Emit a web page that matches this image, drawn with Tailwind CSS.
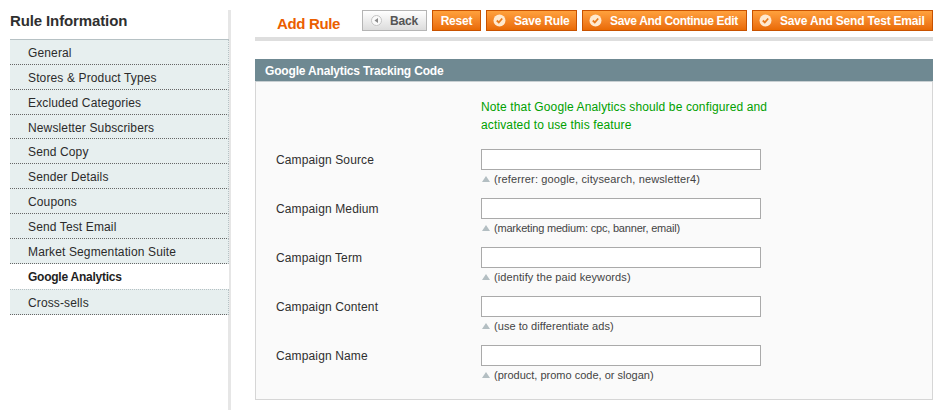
<!DOCTYPE html>
<html><head><meta charset="utf-8"><script src="https://cdn.jsdelivr.net/npm/@tailwindcss/browser@4"></script></head>
<body class="bg-white overflow-hidden">
<div class="w-[943px] h-[410px] overflow-hidden flex font-['Liberation_Sans',Arial,sans-serif] text-[12px] text-[#2f2f2f] tracking-[0.13px]">
  <aside class="w-[231px] shrink-0 mt-[10px] pl-[10px] border-r-[3px] border-[#e6e6e6]">
    <h3 class="h-[29px] pt-[1px] text-[15px] leading-[20px] font-bold text-[#2f2f2f] tracking-[-0.12px]">Rule Information</h3>
    <ul class="w-[219px] border-t border-[#b6c1c4] text-[12px] leading-[24px] text-[#2b2b2b]">
      <li class="h-[24.85px] pl-[18px] pt-[1px] bg-[#e7efef] border-b border-dotted border-[#666] border-r border-r-[#b6c1c4]">General</li>
      <li class="h-[24.85px] pl-[18px] pt-[1px] bg-[#e7efef] border-b border-dotted border-[#666] border-r border-r-[#b6c1c4]">Stores &amp; Product Types</li>
      <li class="h-[24.85px] pl-[18px] pt-[1px] bg-[#e7efef] border-b border-dotted border-[#666] border-r border-r-[#b6c1c4]">Excluded Categories</li>
      <li class="h-[24.85px] pl-[18px] pt-[1px] bg-[#e7efef] border-b border-dotted border-[#666] border-r border-r-[#b6c1c4]">Newsletter Subscribers</li>
      <li class="h-[24.85px] pl-[18px] pt-[1px] bg-[#e7efef] border-b border-dotted border-[#666] border-r border-r-[#b6c1c4]">Send Copy</li>
      <li class="h-[24.85px] pl-[18px] pt-[1px] bg-[#e7efef] border-b border-dotted border-[#666] border-r border-r-[#b6c1c4]">Sender Details</li>
      <li class="h-[24.85px] pl-[18px] pt-[1px] bg-[#e7efef] border-b border-dotted border-[#666] border-r border-r-[#b6c1c4]">Coupons</li>
      <li class="h-[24.85px] pl-[18px] pt-[1px] bg-[#e7efef] border-b border-dotted border-[#666] border-r border-r-[#b6c1c4]">Send Test Email</li>
      <li class="h-[24.85px] pl-[18px] pt-[1px] bg-[#e7efef] border-b border-dotted border-[#666] border-r border-r-[#b6c1c4]">Market Segmentation Suite</li>
      <li class="h-[25.35px] pl-[18px] pt-[1px] bg-white font-bold text-[#1f1f1f] leading-[25px] tracking-[-0.25px]">Google Analytics</li>
      <li class="h-[26px] pl-[18px] pt-[1px] bg-[#e7efef] border-t border-t-[#b6c1c4] border-b border-dotted border-[#666] border-r border-r-[#b6c1c4]">Cross-sells</li>
    </ul>
  </aside>
  <main class="flex-1 min-w-0 pl-[24px] pr-[10px] pt-[10px]">
    <div class="h-[27px] flex items-start border-b-[4px] border-[#dedede] box-content">
      <h3 class="w-[84px] pl-[22px] pt-[5px] text-[15px] leading-[18px] font-bold text-[#eb5e00] whitespace-nowrap tracking-[-0.35px]">Add Rule</h3>
      <div class="flex gap-[5px] font-bold tracking-[-0.2px]">
        <button class="h-[21px] w-[65px] ml-[23px] flex items-center pl-[8px] gap-[8px] bg-gradient-to-b from-[#ffffff] to-[#dcdcdc] border border-[#b5b5b5] text-[#555] text-[12px] leading-none">
          <svg width="11" height="11" viewBox="0 0 11 11"><circle cx="5.500" cy="5.500" r="5" fill="#fafafa" stroke="#c4c4c4"/><path d="M7 3v5L3.500 5.500z" fill="#8a8a8a"/></svg>Back</button>
        <button class="h-[21px] w-[49px] flex items-center justify-center bg-gradient-to-b from-[#ffa13c] to-[#e96a02] border border-[#c85200] text-white text-[12px] leading-none">Reset</button>
        <button class="h-[21px] w-[91px] flex items-center pl-[6px] gap-[8px] bg-gradient-to-b from-[#ffa13c] to-[#e96a02] border border-[#c85200] text-white text-[12px] leading-none whitespace-nowrap">
          <svg width="13" height="13" viewBox="0 0 13 13"><circle cx="6.500" cy="6.500" r="6" fill="#ffe9cf"/><path d="M3.800 6.500l2 2 3.400-4" fill="none" stroke="#e8791a" stroke-width="1.800"/></svg>Save Rule</button>
        <button class="h-[21px] w-[165px] flex items-center pl-[6px] gap-[8px] tracking-[-0.35px] bg-gradient-to-b from-[#ffa13c] to-[#e96a02] border border-[#c85200] text-white text-[12px] leading-none whitespace-nowrap">
          <svg width="13" height="13" viewBox="0 0 13 13"><circle cx="6.500" cy="6.500" r="6" fill="#ffe9cf"/><path d="M3.800 6.500l2 2 3.400-4" fill="none" stroke="#e8791a" stroke-width="1.800"/></svg>Save And Continue Edit</button>
        <button class="h-[21px] w-[181px] flex items-center pl-[6px] gap-[8px] bg-gradient-to-b from-[#ffa13c] to-[#e96a02] border border-[#c85200] text-white text-[12px] leading-none whitespace-nowrap">
          <svg width="13" height="13" viewBox="0 0 13 13"><circle cx="6.500" cy="6.500" r="6" fill="#ffe9cf"/><path d="M3.800 6.500l2 2 3.400-4" fill="none" stroke="#e8791a" stroke-width="1.800"/></svg>Save And Send Test Email</button>
      </div>
    </div>
    <section class="mt-[18px]">
      <div class="h-[22px] pl-[10px] pt-[1px] bg-[#6f8992] text-white font-bold text-[12px] leading-[22px] tracking-[-0.17px]">Google Analytics Tracking Code</div>
      <div class="h-[319px] bg-[#fafafa] border border-t-[#c8cfd2] border-[#d6d6d6] pt-[16px] pl-[20px]">
        <div class="ml-[205px] mb-[15px] text-[#00a000] leading-[18px] w-[320px]">Note that Google Analytics should be configured and activated to use this feature</div>
        <div class="h-[49px] flex"><label class="w-[205px] pt-[1px] leading-[20px] text-[#2f2f2f]">Campaign Source</label><div><input class="block w-[280px] h-[21px] bg-white border border-[#aaa]"><p class="mt-[2px] pl-[13px] text-[11px] leading-[15px] text-[#444] relative"><span class="absolute left-[1px] top-[4px] w-0 h-0 border-x-[4px] border-x-transparent border-b-[6px] border-b-[#b3bec2]"></span>(referrer: google, citysearch, newsletter4)</p></div></div>
        <div class="h-[49px] flex"><label class="w-[205px] pt-[1px] leading-[20px] text-[#2f2f2f]">Campaign Medium</label><div><input class="block w-[280px] h-[21px] bg-white border border-[#aaa]"><p class="mt-[2px] pl-[13px] text-[11px] leading-[15px] text-[#444] relative tracking-[-0.19px]"><span class="absolute left-[1px] top-[4px] w-0 h-0 border-x-[4px] border-x-transparent border-b-[6px] border-b-[#b3bec2]"></span>(marketing medium: cpc, banner, email)</p></div></div>
        <div class="h-[49px] flex"><label class="w-[205px] pt-[1px] leading-[20px] text-[#2f2f2f]">Campaign Term</label><div><input class="block w-[280px] h-[21px] bg-white border border-[#aaa]"><p class="mt-[2px] pl-[13px] text-[11px] leading-[15px] text-[#444] relative tracking-[0.1px]"><span class="absolute left-[1px] top-[4px] w-0 h-0 border-x-[4px] border-x-transparent border-b-[6px] border-b-[#b3bec2]"></span>(identify the paid keywords)</p></div></div>
        <div class="h-[49px] flex"><label class="w-[205px] pt-[1px] leading-[20px] text-[#2f2f2f]">Campaign Content</label><div><input class="block w-[280px] h-[21px] bg-white border border-[#aaa]"><p class="mt-[2px] pl-[13px] text-[11px] leading-[15px] text-[#444] relative tracking-[0.05px]"><span class="absolute left-[1px] top-[4px] w-0 h-0 border-x-[4px] border-x-transparent border-b-[6px] border-b-[#b3bec2]"></span>(use to differentiate ads)</p></div></div>
        <div class="h-[49px] flex"><label class="w-[205px] pt-[1px] leading-[20px] text-[#2f2f2f]">Campaign Name</label><div><input class="block w-[280px] h-[21px] bg-white border border-[#aaa]"><p class="mt-[2px] pl-[13px] text-[11px] leading-[15px] text-[#444] relative tracking-[0px]"><span class="absolute left-[1px] top-[4px] w-0 h-0 border-x-[4px] border-x-transparent border-b-[6px] border-b-[#b3bec2]"></span>(product, promo code, or slogan)</p></div></div>
      </div>
    </section>
  </main>
</div>
</body></html>
